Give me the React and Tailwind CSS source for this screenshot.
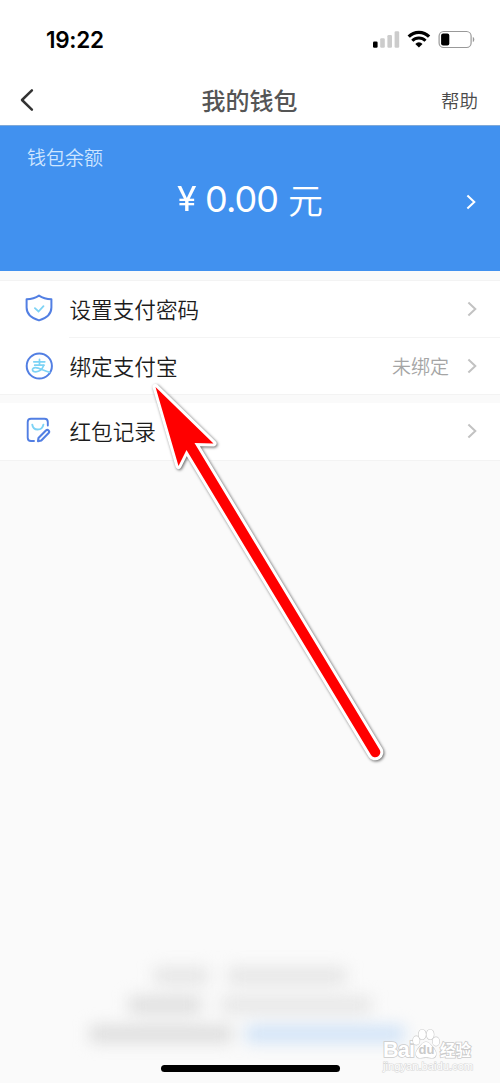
const cjk = "font-['Noto_Sans_CJK_SC',sans-serif]";

function Chevron({ className }) {
  return (
    <svg className={className} width="10" height="16" viewBox="0 0 10 16" fill="none">
      <path d="M1.4 1.500 8.300 8l-6.900 6.500" stroke="currentColor" strokeWidth="2" />
    </svg>
  );
}

function StatusBar() {
  return (
    <div className="h-[75px] flex items-start justify-between pl-[46px] pr-[25px] pt-[26px]">
      <span className="font-['Inter',sans-serif] font-semibold text-[22.5px] leading-[28px] tracking-[-0.3px] text-black">
        19:22
      </span>
      <svg width="103" height="20" viewBox="0 0 103 20" className="mt-[4px]">
        <rect x="1" y="11.5" width="4.6" height="6.3" rx="1.2" fill="#000" />
        <rect x="8.2" y="8.2" width="4.6" height="9.6" rx="1.2" fill="#ccc" />
        <rect x="15.4" y="5" width="4.6" height="12.8" rx="1.2" fill="#ccc" />
        <rect x="22.6" y="1.3" width="4.6" height="16.5" rx="1.2" fill="#ccc" />
        <path d="M36.7 6.600a14.2 14.2 0 0 1 20.4 0" fill="none" stroke="#000" strokeWidth="3.2" />
        <path d="M40.3 10.700a9.2 9.2 0 0 1 13.2 0" fill="none" stroke="#000" strokeWidth="3" />
        <path d="M46.900 17.4 43.3 13.9a5 5 0 0 1 7.2 0z" fill="#000" />
        <rect x="67.1" y="1.5" width="32" height="16" rx="4.6" fill="none" stroke="#999" strokeWidth="1.2" />
        <rect x="69.100" y="3.500" width="8.200" height="12" rx="2" fill="#000" />
        <path d="M100.800 7v5c2-.6 2-4.400 0-5z" fill="#999" />
      </svg>
    </div>
  );
}

function NavBar() {
  return (
    <div className="h-[50px] grid grid-cols-3 items-center pl-[19px] pr-[22px]">
      <svg width="16" height="24" viewBox="0 0 16 24" fill="none">
        <path
          d="M12.9 2.300 3 12l9.900 9.700"
          stroke="#333"
          strokeWidth="2.5"
          strokeLinecap="round"
          strokeLinejoin="round"
        />
      </svg>
      <h1 className="text-center pl-[2px] text-[24px] leading-[50px] font-medium text-[#555]">我的钱包</h1>
      <span className="text-right text-[18.5px] leading-[50px] font-[350] text-[#4a4a4a]">帮助</span>
    </div>
  );
}

function Balance() {
  return (
    <div className="h-[146px] bg-[#4191ef] border-t border-[#7fa9d8] text-white">
      <p className="pl-[27px] pt-[17px] text-[19px] leading-[28px] font-[350] text-[#cfe6ff]">钱包余额</p>
      <div className="h-[56px] flex items-center justify-between pl-[177px] pr-[24px]">
        <div className="flex items-center gap-[8px] leading-[56px]">
          <span className="font-['Inter',sans-serif] text-[34px] font-normal w-[21px] origin-left scale-x-105">¥</span>
          <span className="font-['Inter',sans-serif] text-[36px] font-normal w-[74px] tracking-[-0.900px] -ml-px mr-px">
            0.00
          </span>
          <span className="text-[35px] font-[350]">元</span>
        </div>
        <Chevron className="mt-[5px]" />
      </div>
    </div>
  );
}

function ShieldIcon() {
  return (
    <svg width="28" height="28" viewBox="0 0 28 28" fill="none">
      <path
        d="M14 1.600c3.600 2.400 7.500 3.500 12.400 3.700v8.200c0 6.300-4.700 10.600-12.400 12.900C6.300 24.100 1.600 19.800 1.600 13.500V5.300C6.500 5.100 10.400 4 14 1.600z"
        stroke="#527fe3"
        strokeWidth="2"
        strokeLinejoin="round"
      />
      <path d="m9.900 14.200 3.600 3.300 5-5.400" stroke="#7dd3f5" strokeWidth="1.800" strokeLinecap="round" />
    </svg>
  );
}

function AlipayIcon() {
  return (
    <svg className="mt-[2px]" width="28" height="28" viewBox="0 0 28 28" fill="none">
      <circle cx="14.3" cy="14" r="12.600" stroke="#527fe3" strokeWidth="2" />
      <g stroke="#7dd3f5" strokeWidth="1.700" strokeLinecap="round">
        <path d="M8.800 9.800h11M14.500 7.300v5.900M9.700 13.200h9.200" />
        <path d="M18.800 13.300c-1.300 3.300-4 6.500-8 6.500-4.300 0-4.400-4.100-.5-4.100 4 0 8 3 14.200 4.600" />
      </g>
    </svg>
  );
}

function RecordIcon() {
  return (
    <svg width="28" height="28" viewBox="0 0 28 28" fill="none">
      <g stroke="#527fe3" strokeWidth="1.900" strokeLinecap="round" strokeLinejoin="round">
        <path d="M9 25H6c-2 0-3.300-1.300-3.300-3.300V6C2.700 4 4 2.700 6 2.700h13.500c2 0 3.300 1.300 3.300 3.300v3.500" />
        <path d="m13 25.200.5-3.300 7.400-7.400c1.900-1.700 4.300.6 2.700 2.500l-7.300 7.400z" strokeWidth="2.100" />
      </g>
      <path d="M7.300 8.600c.8 6.600 9.800 6.600 11.100 0" stroke="#7dd3f5" strokeWidth="1.900" strokeLinecap="round" />
    </svg>
  );
}

function Row({ icon, label, value, divider }) {
  return (
    <div className="flex h-[57px] pl-[25px]">
      <div className="w-[44px] flex items-center pb-[3px]">{icon}</div>
      <div
        className={`flex-1 flex items-center pr-[23px] border-b ${divider ? "border-[#f4f4f4]" : "border-transparent"}`}
      >
        <span className="flex-1 pl-[0.500px] text-[21.600px] leading-[30px] font-[350] text-[#1c1c1c]">{label}</span>
        {value && <span className="mr-[18px] text-[19px] leading-[28px] font-[350] text-[#a5a5a5]">{value}</span>}
        <Chevron className="text-[#c2c2c2]" />
      </div>
    </div>
  );
}

function PointerArrow() {
  return (
    <svg
      className="absolute left-0 top-0 pointer-events-none drop-shadow-[1px_1px_1.500px_rgba(0,0,0,0.6)]"
      width="500"
      height="800"
      viewBox="0 0 500 800"
    >
      <path
        d="M155.500 387 213.500 443.500 194.500 443 379.500 749.500A5 5 0 0 1 371 755L186.500 450 178.500 466z"
        fill="#f00"
        stroke="#fff"
        strokeWidth="6"
        strokeLinejoin="round"
        paintOrder="stroke"
      />
    </svg>
  );
}

function FooterBlur() {
  return (
    <div className="flex flex-col items-center gap-[13px] blur-[8px]">
      <div className="flex gap-[20px]">
        <div className="w-[54px] h-[16px] bg-[#e4e4e4]" />
        <div className="w-[118px] h-[16px] bg-[#e4e4e4]" />
      </div>
      <div className="flex gap-[20px]">
        <div className="w-[72px] h-[16px] bg-[#dcdcdc]" />
        <div className="w-[150px] h-[16px] bg-[#e5e5e5]" />
      </div>
      <div className="flex gap-[14px] mr-[6px]">
        <div className="w-[142px] h-[16px] bg-[#dbdbdb]" />
        <div className="w-[158px] h-[16px] bg-[#cde1f7]" />
      </div>
    </div>
  );
}

function Watermark() {
  return (
    <div className="absolute left-[383px] top-[1028px] w-[100px] text-white [paint-order:stroke] [-webkit-text-stroke:1.600px_#cacaca]">
      <div className="flex items-end h-[32px]">
        <span className="font-['Liberation_Sans',sans-serif] font-bold text-[21.500px] leading-[20px] w-[29px] tracking-[-0.800px]">
          Bai
        </span>
        <div className="relative w-[28px] h-[32px]">
          <svg width="28" height="32" viewBox="0 0 28 32" fill="#fff" stroke="#cacaca" strokeWidth="1.200">
            <path d="M14 14c4 0 5.500 4.500 8.500 7.500 3 4 1.500 8.500-2.500 8.500-2.500 0-4-.7-6-.7s-3.500.7-6 .7c-4 0-5.500-4.500-2.500-8.500C8.500 18.500 10 14 14 14z" />
            <ellipse cx="4.300" cy="12.500" rx="3.300" ry="4.300" />
            <ellipse cx="10.200" cy="6.500" rx="3.600" ry="5" />
            <ellipse cx="18.200" cy="6.500" rx="3.600" ry="5" />
            <ellipse cx="24" cy="13.500" rx="3.300" ry="4.300" />
          </svg>
          <span className="absolute left-[6.500px] top-[15px] font-['Liberation_Sans',sans-serif] text-[13px] leading-[14px] font-bold text-[#cacaca] [-webkit-text-stroke:0px]">
            du
          </span>
        </div>
        <span className="text-[15.500px] leading-[22px] font-bold">经验</span>
      </div>
      <p className="font-['Liberation_Sans',sans-serif] text-[11.200px] leading-[13px] [-webkit-text-stroke:1.200px_#d8d8d8]">
        jingyan.baidu.com
      </p>
    </div>
  );
}

export default function App() {
  return (
    <div className={`relative w-[500px] h-[1083px] overflow-hidden bg-[#fafafa] flex flex-col ${cjk}`}>
      <div className="bg-white">
        <StatusBar />
        <NavBar />
      </div>
      <Balance />
      <div className="mt-[9px] bg-white border-t border-[#f3f3f3]">
        <Row icon={<ShieldIcon />} label="设置支付密码" divider />
        <Row icon={<AlipayIcon />} label="绑定支付宝" value="未绑定" />
      </div>
      <div className="h-[9px] -mt-px border-t border-[#f3f3f3] bg-[#fafafa]" />
      <div className="bg-white border-b border-[#f3f3f3]">
        <Row icon={<RecordIcon />} label="红包记录" />
      </div>
      <div className="mt-auto pb-[11px] flex flex-col items-center gap-[23px]">
        <FooterBlur />
        <div className="w-[179px] h-[7px] rounded-full bg-black" />
      </div>
      <PointerArrow />
      <Watermark />
    </div>
  );
}
